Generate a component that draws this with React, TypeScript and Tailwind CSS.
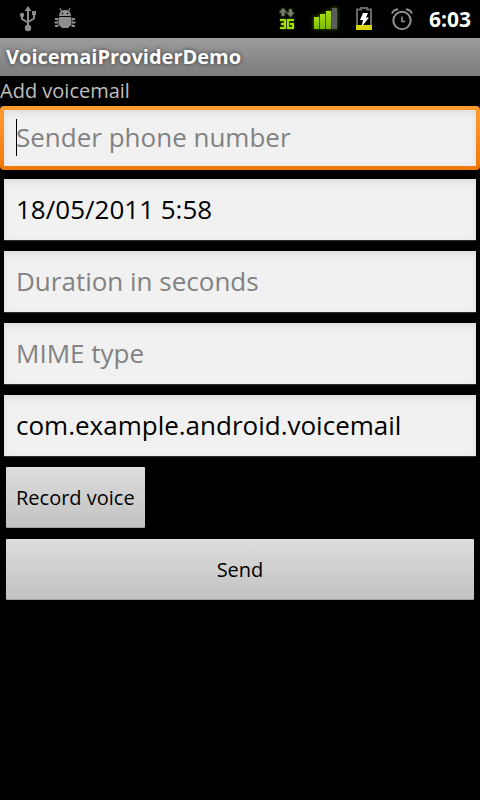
import { useState } from "react";

const FONT = "font-['Open_Sans','Noto_Sans',sans-serif]";

function UsbIcon() {
  return (
    <svg width="18" height="26" viewBox="0 0 18 26" fill="#8e8e8e" aria-hidden="true">
      <path d="M9 0l3.400 5H5.600z" />
      <circle cx="9" cy="22" r="3.200" />
      <circle cx="3" cy="9" r="2.200" />
      <rect x="13" y="5" width="4" height="4" />
      <path d="M9 3v18M3 9v4L9 16.500M15 8v4.500L9 16" fill="none" stroke="#8e8e8e" strokeWidth="2" />
    </svg>
  );
}

function DebugIcon() {
  return (
    <svg width="22" height="22" viewBox="0 0 22 22" fill="#8e8e8e" aria-hidden="true">
      <path d="M5 8c.2-4 2.400-6 6-6s5.800 2 6 6z" />
      <path d="M7.500 3L6 .3M14.500 3L16 .3" stroke="#8e8e8e" strokeWidth="1.200" />
      <circle cx="8.500" cy="5.500" r=".8" fill="#000" />
      <circle cx="13.500" cy="5.500" r=".8" fill="#000" />
      <path d="M5 9h12v8l-3 3H8l-3-3z" />
      <path d="M4 10v9M18 10v9" stroke="#8e8e8e" strokeWidth="1" />
      <path d="M4 11H1M4 14.500H.5M4 18H1M18 11h3M18 14.500h3.500M18 18h3" stroke="#8e8e8e" strokeWidth="2" />
    </svg>
  );
}

function DataIcon() {
  return (
    <svg className="drop-shadow-[0_0_1px_#4c7a00]" width="16" height="22" viewBox="0 0 16 22" aria-hidden="true">
      <path d="M4 0L8 4.500H5.500V8H2.500V4.500H0zM11.500 9L7.500 4.500H10V1h3v3.500h2.500z" fill="#777" />
      <path d="M1 12h5v8H1M2 16h4M15 12H9v8h5v-4h-3" fill="none" stroke="#9fe000" strokeWidth="2" />
    </svg>
  );
}

function SignalIcon() {
  return (
    <svg className="drop-shadow-[0_0_2px_#4c7a00]" width="24" height="22" viewBox="0 0 24 22" aria-hidden="true">
      <defs>
        <linearGradient id="bars" x1="0" y1="0" x2="0" y2="1">
          <stop offset="0" stopColor="#a4dc10" />
          <stop offset="1" stopColor="#7fb800" />
        </linearGradient>
      </defs>
      <g fill="url(#bars)">
        <rect x="1" y="9" width="5" height="12" />
        <rect x="7" y="6" width="5" height="15" />
        <rect x="13" y="3" width="5" height="18" />
      </g>
      <rect x="19" y="0" width="5" height="21" fill="#5c5c5c" />
    </svg>
  );
}

function BatteryIcon() {
  return (
    <svg width="18" height="24" viewBox="0 0 18 24" aria-hidden="true">
      <path d="M6 2.500V1h6v1.500h4V22H2V2.500z" fill="#000" stroke="#686868" strokeWidth="2" />
      <rect x="1" y="18" width="16" height="5" fill="#d8d500" />
      <path d="M8 6h5l-2 4.500h3L6.500 20l1.500-7H5z" fill="#fff" />
    </svg>
  );
}

function AlarmIcon() {
  return (
    <svg width="22" height="23" viewBox="0 0 22 23" fill="none" stroke="#929292" aria-hidden="true">
      <circle cx="11" cy="12.500" r="8.700" strokeWidth="2" />
      <path d="M11 8.500V13.500H14" strokeWidth="1.600" />
      <path d="M1 5.500C2 3 4 1.500 7 1.200M21 5.500C20 3 18 1.500 15 1.200" strokeWidth="2" />
    </svg>
  );
}

function StatusBar() {
  return (
    <header className="flex h-[38px] items-center justify-between pl-[19px] pr-[9px]">
      <div className="flex items-center gap-[17px]">
        <UsbIcon />
        <DebugIcon />
      </div>
      <div className="flex items-center">
        <div className="flex items-center gap-[18px]">
          <DataIcon />
          <SignalIcon />
          <BatteryIcon />
          <AlarmIcon />
        </div>
        <time className="ml-4 pt-[2px] text-[21px] font-bold text-white">6:03</time>
      </div>
    </header>
  );
}

const FIELD =
  "block w-full bg-[#f1f1f1] pb-[2px] text-[26px] text-black outline-none placeholder:text-[#828282]";
const PLAIN =
  "mt-px h-[62px] border-b border-[#2c2c2c] px-3 shadow-[inset_0_5px_7px_-2px_#dcdcdc,inset_0_0_4px_#e6e6e6]";
const BUTTON =
  "mt-px h-[61px] rounded-[1px] border-t border-b border-t-[#e4e4e4] border-b-[#a4a4a4] bg-linear-to-b from-[#dcdcdc] to-[#c2c2c2] text-[20px] text-black";

export default function App() {
  const [sender, setSender] = useState("");
  return (
    <div className={`min-h-screen bg-black ${FONT}`}>
      <StatusBar />
      <h1 className="flex h-[38px] items-center bg-linear-to-b from-[#9c9c9c] to-[#7c7c7c] px-[6px] text-[20px] font-bold text-white [text-shadow:0_0_4px_#333]">
        VoicemaiProviderDemo
      </h1>
      <form onSubmit={(e) => e.preventDefault()}>
        <h2 className="h-[30px] text-[20px] leading-[30px] text-[#bebebe]">Add voicemail</h2>
        <div className="grid auto-rows-[72px]">
          <div className="relative h-16 rounded-[4px] bg-linear-to-b from-[#ff9d2e] to-[#f07800] p-1">
            <input
              aria-label="Sender phone number"
              placeholder="Sender phone number"
              value={sender}
              onChange={(e) => setSender(e.target.value)}
              className={`${FIELD} h-14 px-3 caret-black shadow-[inset_0_5px_7px_-2px_#dcdcdc,inset_0_0_4px_#e6e6e6]`}
            />
            {sender === "" && <span className="absolute top-[13px] left-4 h-[37px] w-px bg-black" />}
          </div>
          <div className="px-1">
            <input aria-label="Date and time" defaultValue="18/05/2011 5:58" className={`${FIELD} ${PLAIN}`} />
          </div>
          <div className="px-1">
            <input aria-label="Duration in seconds" placeholder="Duration in seconds" className={`${FIELD} ${PLAIN}`} />
          </div>
          <div className="px-1">
            <input aria-label="MIME type" placeholder="MIME type" className={`${FIELD} ${PLAIN}`} />
          </div>
          <div className="px-1">
            <input aria-label="Source package" defaultValue="com.example.android.voicemail" className={`${FIELD} ${PLAIN}`} />
          </div>
          <div className="px-[6px]">
            <button type="button" className={`${BUTTON} px-[10px]`}>Record voice</button>
          </div>
          <div className="px-[6px]">
            <button type="submit" className={`${BUTTON} w-full`}>Send</button>
          </div>
        </div>
      </form>
    </div>
  );
}
